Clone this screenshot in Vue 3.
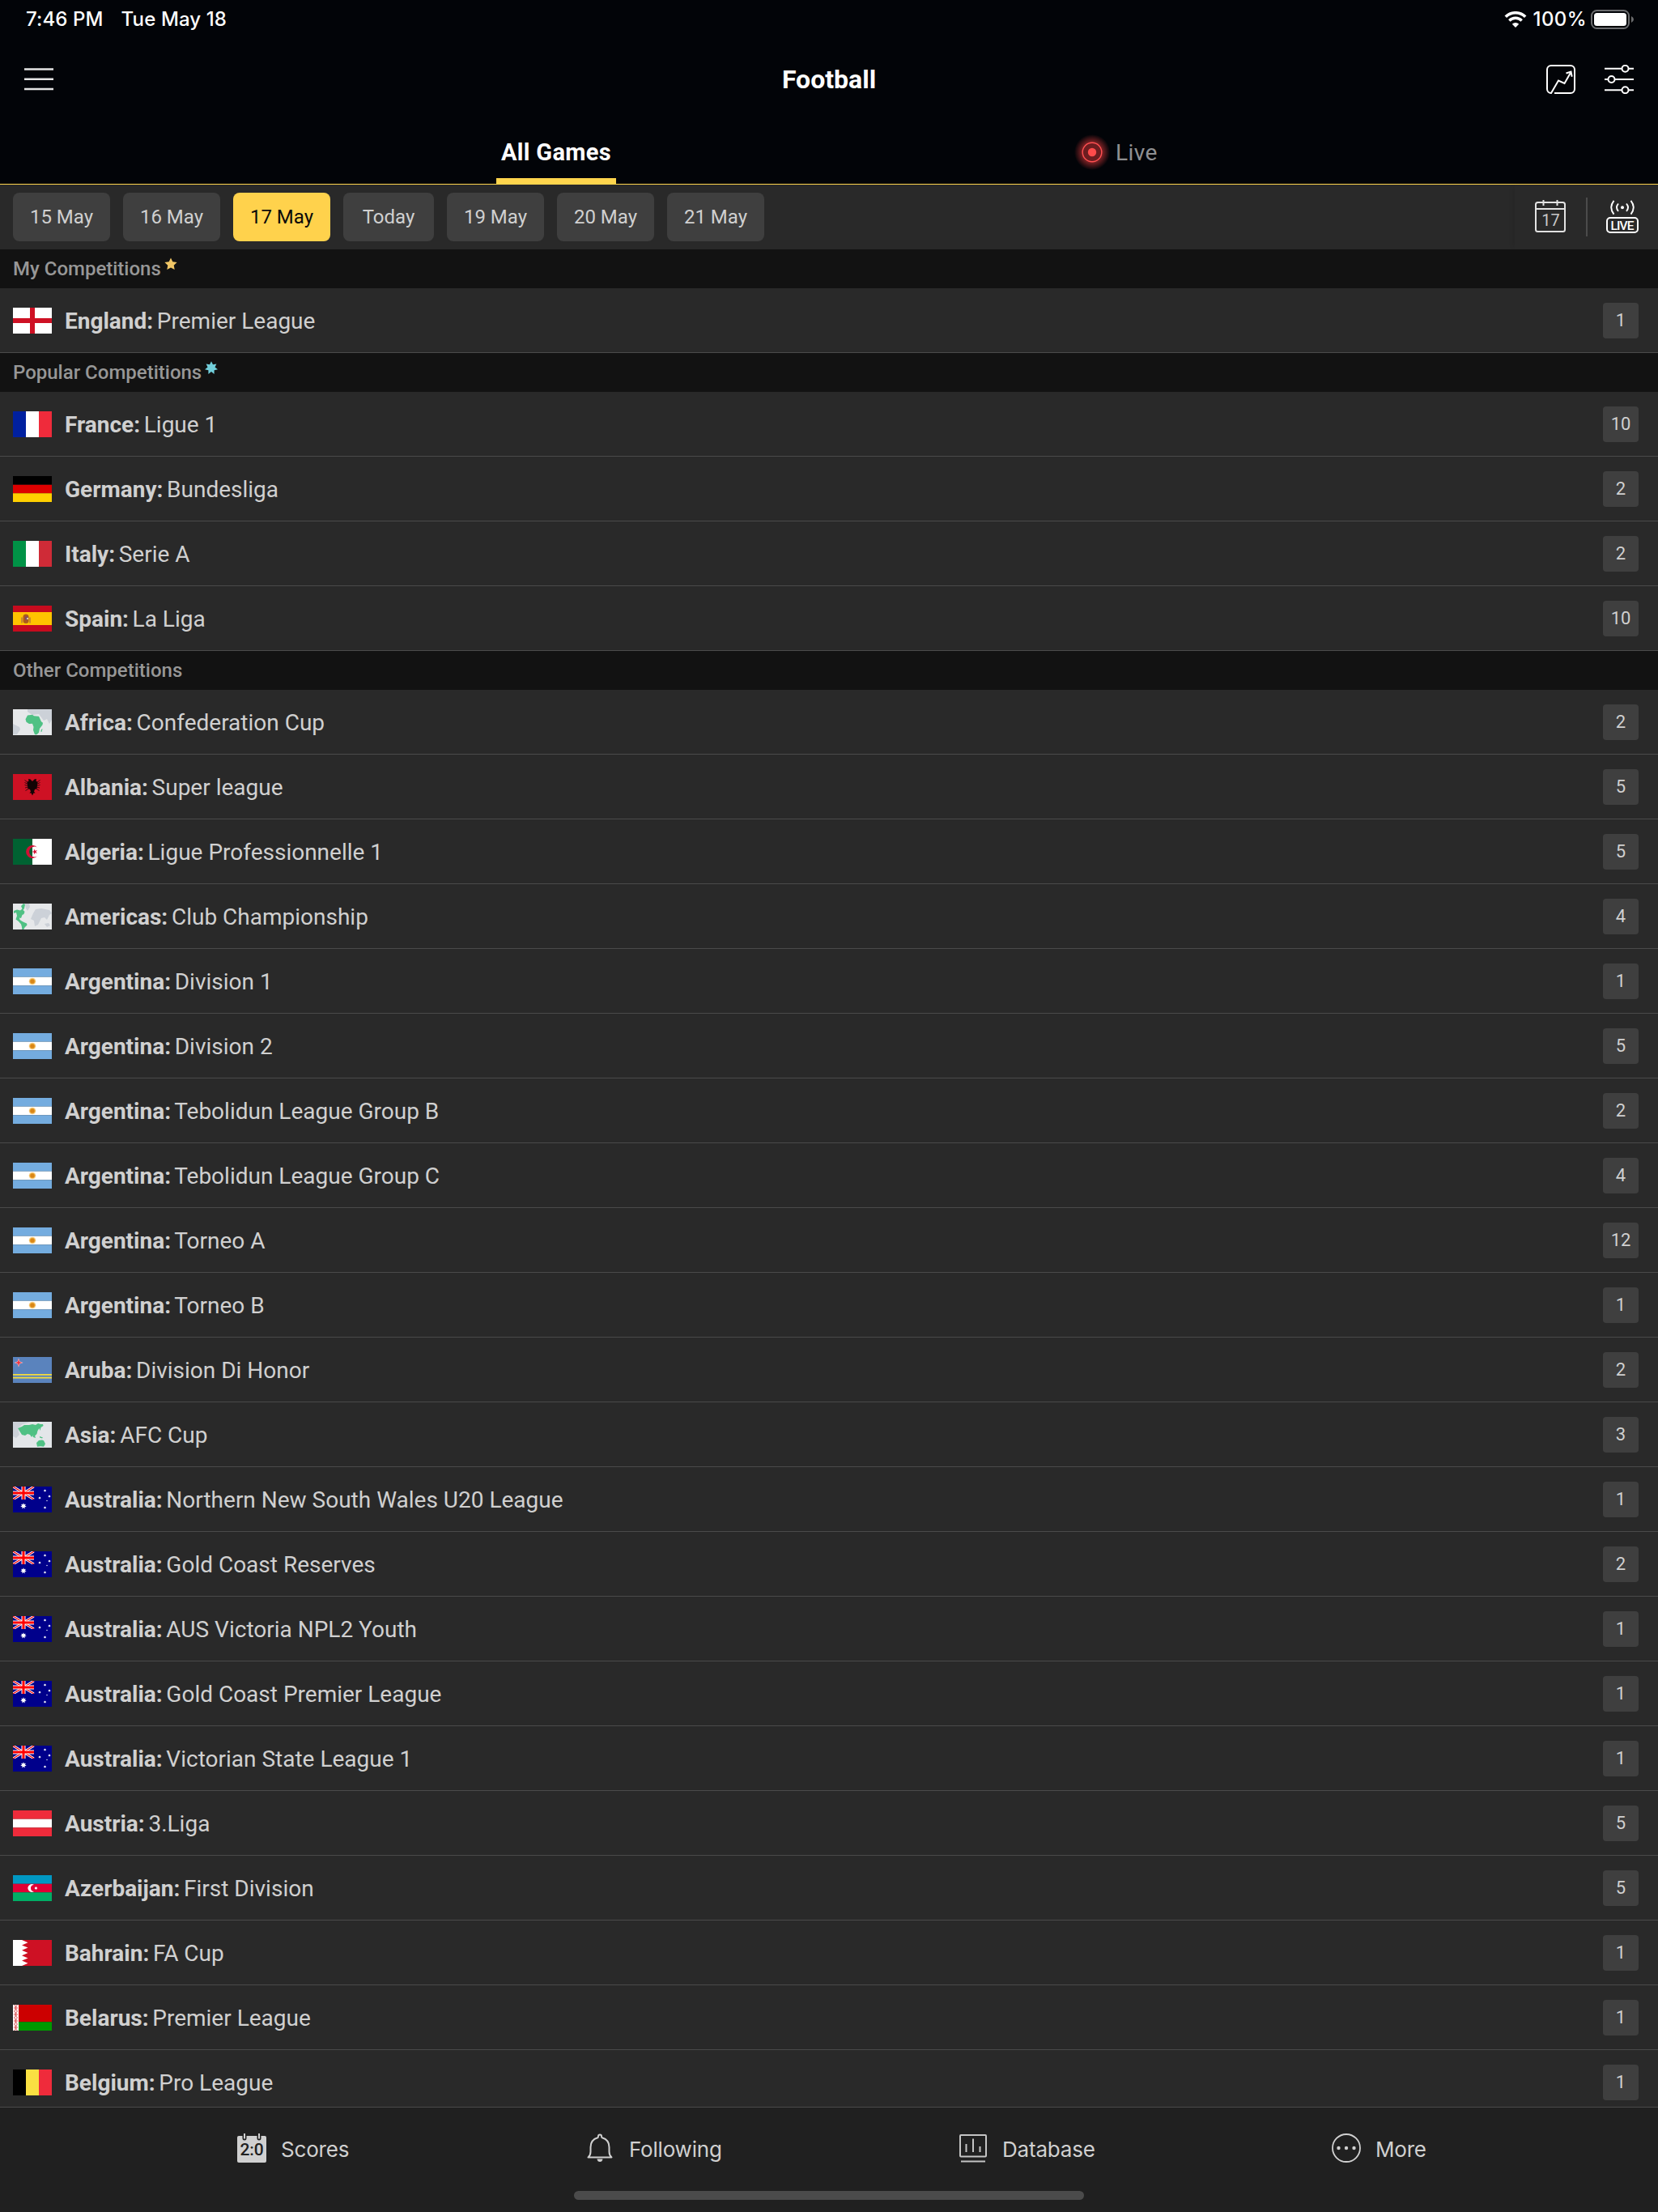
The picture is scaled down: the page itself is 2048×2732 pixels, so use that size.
<script setup>
const star = (cx, cy, R, r, n, rot = -90) => {
  const pts = []
  for (let i = 0; i < n * 2; i++) {
    const a = ((rot + (i * 180) / n) * Math.PI) / 180
    const d = i % 2 ? r : R
    pts.push(`${(cx + d * Math.cos(a)).toFixed(2)},${(cy + d * Math.sin(a)).toFixed(2)}`)
  }
  return pts.join(' ')
}
const v = (a, b, c) =>
  `<path fill="${a}" d="M0 0h16v32H0z"/><path fill="${b}" d="M16 0h16v32H16z"/><path fill="${c}" d="M32 0h16v32H32z"/>`
const h = (a, b, c) =>
  `<path fill="${a}" d="M0 0h48v10.67H0z"/><path fill="${b}" d="M0 10.67h48v10.66H0z"/><path fill="${c}" d="M0 21.33h48V32H0z"/>`
const poly = (fill, pts) => `<polygon fill="${fill}" points="${pts}"/>`

const flags = {
  england: '<path fill="#fff" d="M0 0h48v32H0z"/><path fill="#ce1124" d="M21 0h6v32h-6zM0 13h48v6H0z"/>',
  france: v('#00209f', '#fff', '#ef2b3b'),
  germany: h('#000', '#dd0000', '#ffcf00'),
  italy: v('#009246', '#fff', '#cf2b37'),
  spain:
    '<path fill="#c60b1e" d="M0 0h48v32H0z"/><path fill="#ffc400" d="M0 8h48v16H0z"/><path fill="#c98b2c" d="M10 14.5h2v7h-2zM20 14.5h2v7h-2z"/><path fill="#ad5a1e" d="M12.5 13.5c0-4 7-4 7 0v5.500q0 3-3.500 3t-3.500-3z"/><path fill="#7c4a6e" d="M15 13.500h3.500v4H15z"/><path fill="#d9c9a0" d="M17 15h2v2h-2z"/>',
  africa:
    '<path fill="#e6e8ea" d="M0 0h48v32H0z"/><path fill="#ccd1d8" d="M18 0h30v13l-3 5-3-6-4 2-6-8-8 1-6-4zM0 18l8 4 1 3-4 6H0z"/><path fill="#4fc184" d="M18 7.500l6-.8 2 1.500 6 .6 3 6.500 2 1.500-.5 2.500-3.500 4.500-1 5-2.500 2.400h-2.500l-2-5.500.5-4-1.500-4-4 .2-3.500-2.200-1-3.500z"/><path fill="#4fc184" d="M35 25l1.500-1-1 4-1.200-.5z"/>',
  albania:
    '<path fill="#ce1124" d="M0 0h48v32H0z"/><path fill="none" stroke="#3a0a10" stroke-width="1" d="M14.500 7.500l4 3M14.500 10.500l4 2M14.500 13.500l4 1M15 17l4-1M15.500 20.500l4-2.500M33.500 7.500l-4 3M33.500 10.500l-4 2M33.500 13.500l-4 1M33 17l-4-1M32.500 20.500l-4-2.500"/><path fill="#120405" d="M19 6l2.500.5L24 9l2.500-2.500L29 6l-.5 2.500 2 1.500-1 8-2.500 1-1 2.500 1.500 2-2 0L24 26.500l-1.500-3h-2l1.500-2-1-2.500-2.500-1-1-8 2-1.500z"/>',
  algeria:
    '<path fill="#006232" d="M0 0h24v32H0z"/><path fill="#fff" d="M24 0h24v32H24z"/><path fill="#d21034" d="M30.200 10.800a8 8 0 1 0 0 10.400 6.400 6.400 0 1 1 0-10.400z"/>' +
    poly('#d21034', star(27, 16, 3.6, 1.4, 5, 180)),
  americas:
    '<path fill="#e6e8ea" d="M0 0h48v32H0z"/><path fill="#ccd1d8" d="M15 0h5l1 4-3 5-2-3zM25 12l3-5 7-1 10 2 3 4-3 2-3 6-3-3-4 1-4 8-4 2-1-7-4-2zM39 25l5-1 2 3-4 2z"/><path fill="#4fc184" d="M1 9l4-1.500 4 1 2.500-2L10 3l3-3 2 1-1 5-1.500 2 2 2-1 3-2 1-1.500 4-2-.5.500 2.500 3 2 2 1 3.500 1.500.5 2-3 3-2 4-1-.5-.6-4.500-.9-3-3-3.500-3.500-2.500L5 15l-1-4-3 1z"/>',
  argentina:
    h('#74acdf', '#fff', '#74acdf') + poly('#f0b040', star(24, 16, 4.6, 3.4, 12)) + '<circle cx="24" cy="16" r="2.600" fill="#d98618"/>',
  aruba:
    '<path fill="#5a83bd" d="M0 0h48v32H0z"/><path fill="#f5dc3c" d="M0 21h48v1.700H0zM0 24.700h48v1.700H0z"/>' +
    poly('#f7c9cf', star(7, 7, 5.6, 2, 4)) + poly('#ef3340', star(7, 7, 4.4, 1.4, 4)),
  asia:
    '<path fill="#e3e6e9" d="M0 0h48v32H0z"/><path fill="#ccd1d8" d="M0 0h22l-10 3-6 5 2 8-4 4-4-2z"/><path fill="#4fc184" d="M6 8l5-2 3-2 6 0 4-1 4 1 3-2 3 1 3 0 .5 2-3 2-1 4-1-3-2 3-1 4-3 3-1.500-2-2 3-2-3-3-1-3 2-4-1zM24 16l3 1 1 3-3-1zM33 18l4 1.500-1 1-3-1zM29 26l3-3 4-.5 2 .7 2 4-2 3.500-4-.5-4 .5z"/>',
  australia:
    '<path fill="#00008b" d="M0 0h48v32H0z"/><path stroke="#fff" stroke-width="3" d="M0 0l26 16M26 0L0 16"/><path stroke="#f00" stroke-width="1.100" d="M0 0l26 16M26 0L0 16"/><path stroke="#fff" stroke-width="5" d="M13 0v16M0 8h26"/><path stroke="#f00" stroke-width="3" d="M13 0v16M0 8h26"/><path fill="#00008b" d="M26.500 0h4v17h-4zM0 16h30v3H0z"/>' +
    [[13, 24, 3.8], [39.5, 5, 1.8], [33, 14, 1.8], [45, 12, 1.8], [39.5, 26, 1.8]].map(([x, y, r]) => poly('#fff', star(x, y, r, r * 0.5, 7))).join('') +
    '<circle cx="42" cy="17.500" r=".7" fill="#fff"/>',
  austria: h('#ef2b3b', '#fff', '#ef2b3b'),
  azerbaijan:
    h('#0098c3', '#e00034', '#00ae65') +
    '<path fill="#fff" d="M26 12a4.800 4.800 0 1 0 0 8 4 4 0 1 1 0-8z"/>' + poly('#fff', star(28.4, 16, 2, 1.2, 8)),
  bahrain:
    '<path fill="#ce1124" d="M0 0h48v32H0z"/><path fill="#fff" d="M0 0h11l7.500 3.200L11 6.400l7.500 3.200L11 12.800l7.500 3.200-7.500 3.200 7.500 3.200-7.500 3.200 7.500 3.200L11 32H0z"/>',
  belarus:
    '<path fill="#c00" d="M0 0h48v21.330H0z"/><path fill="#090" d="M0 21.330h48V32H0z"/><path fill="#fff" d="M0 0h7v32H0z"/><path fill="none" stroke="#d84848" stroke-width="1" d="M1.500 0l4 4-4 4 4 4-4 4 4 4-4 4 4 4-4 4M5.500 0l-4 4 4 4-4 4 4 4-4 4 4 4-4 4 4 4M3.500 3v2M3.500 11v2M3.500 19v2M3.500 27v2"/>',
  belgium: v('#000', '#fae042', '#ef2b3b'),
}

const dates = [
  { label: '15 May' },
  { label: '16 May' },
  { label: '17 May', active: true },
  { label: 'Today', today: true },
  { label: '19 May' },
  { label: '20 May' },
  { label: '21 May' },
]

const row = (country, league, count) => ({ country, league, count, flag: flags[country.toLowerCase()] })
const sections = [
  { title: 'My Competitions', mark: star(8, 8.500, 8, 3.9, 5), color: '#f0c666', rows: [row('England', 'Premier League', 1)] },
  {
    title: 'Popular Competitions',
    mark: star(8, 8.500, 8.2, 4.6, 7),
    color: '#72cfdb',
    rows: [row('France', 'Ligue 1', 10), row('Germany', 'Bundesliga', 2), row('Italy', 'Serie A', 2), row('Spain', 'La Liga', 10)],
  },
  {
    title: 'Other Competitions',
    rows: [
      row('Africa', 'Confederation Cup', 2),
      row('Albania', 'Super league', 5),
      row('Algeria', 'Ligue Professionnelle 1', 5),
      row('Americas', 'Club Championship', 4),
      row('Argentina', 'Division 1', 1),
      row('Argentina', 'Division 2', 5),
      row('Argentina', 'Tebolidun League Group B', 2),
      row('Argentina', 'Tebolidun League Group C', 4),
      row('Argentina', 'Torneo A', 12),
      row('Argentina', 'Torneo B', 1),
      row('Aruba', 'Division Di Honor', 2),
      row('Asia', 'AFC Cup', 3),
      row('Australia', 'Northern New South Wales U20 League', 1),
      row('Australia', 'Gold Coast Reserves', 2),
      row('Australia', 'AUS Victoria NPL2 Youth', 1),
      row('Australia', 'Gold Coast Premier League', 1),
      row('Australia', 'Victorian State League 1', 1),
      row('Austria', '3.Liga', 5),
      row('Azerbaijan', 'First Division', 5),
      row('Bahrain', 'FA Cup', 1),
      row('Belarus', 'Premier League', 1),
      row('Belgium', 'Pro League', 1),
    ],
  },
]
</script>

<template>
  <div class="app">
    <header class="top">
      <div class="status">
        <span class="time">7:46 PM</span>
        <span class="day">Tue May 18</span>
        <svg class="wifi" width="28" height="20" viewBox="0 0 28 20">
          <path d="M1.800 6.800a17.300 17.300 0 0 1 24.400 0" fill="none" stroke="#fff" stroke-width="3.600" />
          <path d="M6.300 11.500a10.900 10.900 0 0 1 15.400 0" fill="none" stroke="#fff" stroke-width="3.400" />
          <path d="M14 20l-4.200-4.300a6 6 0 0 1 8.400 0z" fill="#fff" />
        </svg>
        <span class="pct">100%</span>
        <svg class="battery" width="54" height="24" viewBox="0 0 54 24">
          <rect x="1" y="1" width="46" height="22" rx="6.500" fill="none" stroke="#6b6c6e" stroke-width="2" />
          <rect x="4" y="4" width="40" height="16" rx="3.500" fill="#fff" />
          <path d="M50 8q3 1.500 3 4t-3 4z" fill="#6b6c6e" />
        </svg>
      </div>
      <div class="navbar">
        <svg class="menu" width="36" height="28" viewBox="0 0 36 28">
          <path d="M0 1.500h36M0 13.700h36M0 26h36" stroke="#e4e4e4" stroke-width="2.400" />
        </svg>
        <h1>Football</h1>
        <div class="actions">
          <svg width="36" height="36" viewBox="0 0 36 36" fill="none" stroke="#fff" stroke-width="2">
            <path d="M10 35h20a5 5 0 0 0 5-5V6a5 5 0 0 0-5-5H6a5 5 0 0 0-5 5v24a5 5 0 0 0 5 5l9-15.500 7.500 3.500L30.500 9M24.500 10.500l6-2 1.200 6.300" />
          </svg>
          <svg width="36" height="36" viewBox="0 0 36 36" fill="none" stroke="#fff" stroke-width="2">
            <path d="M0 4.800h21.500M29.500 4.800H36M0 18h4.500M12.500 18H36M0 31.200h21.500M29.500 31.200H36" />
            <circle cx="25.500" cy="4.800" r="4" /><circle cx="8.500" cy="18" r="4" /><circle cx="25.500" cy="31.200" r="4" />
          </svg>
        </div>
      </div>
      <nav class="tabs">
        <a class="tab all">All Games</a>
        <a class="tab live">
          <svg width="44" height="44" viewBox="0 0 44 44">
            <defs>
              <radialGradient id="glow">
                <stop offset=".5" stop-color="#e03a3c" stop-opacity=".62" />
                <stop offset="1" stop-color="#e03a3c" stop-opacity="0" />
              </radialGradient>
            </defs>
            <circle cx="22" cy="22" r="22" fill="url(#glow)" />
            <circle cx="22" cy="22" r="11.800" fill="#6c1d20" stroke="#ff5052" stroke-width="1.400" />
            <circle cx="22" cy="22" r="5.200" fill="#ff4b4b" />
          </svg>
          <span>Live</span>
        </a>
      </nav>
    </header>

    <div class="datebar">
      <div class="chips">
        <span v-for="d in dates" :key="d.label" class="chip" :class="{ active: d.active, today: d.today }">{{ d.label }}</span>
      </div>
      <div class="tools">
        <svg class="cal" width="38" height="40" viewBox="0 0 38 40">
          <rect x="1" y="3" width="36" height="36" rx="2.500" fill="none" stroke="#e2e2e2" stroke-width="2" />
          <path d="M1 11h36M10.500 0v7M27.500 0v7" fill="none" stroke="#e2e2e2" stroke-width="2" />
          <text x="19.500" y="31.800" text-anchor="middle" class="cal-num">17</text>
        </svg>
        <i class="sep"></i>
        <svg class="livebtn" width="40" height="40" viewBox="0 0 40 40">
          <rect x="1" y="22" width="38" height="18" rx="4" fill="none" stroke="#fff" stroke-width="2" />
          <text x="20" y="36.600" text-anchor="middle" textLength="29" class="live-txt">LIVE</text>
          <g fill="none" stroke="#fff" stroke-width="1.900">
            <path d="M15 4.500q-4 4.700 0 9.400M25 4.500q4 4.700 0 9.400M9.500.8q-6.500 8.400 0 16.800M30.500.8q6.500 8.400 0 16.800" />
          </g>
          <circle cx="20" cy="9.200" r="2" fill="#fff" />
        </svg>
      </div>
    </div>

    <main class="list">
      <section v-for="s in sections" :key="s.title">
        <h2>
          {{ s.title }}
          <svg v-if="s.mark" width="16" height="16" viewBox="0 0 16 16"><polygon :points="s.mark" :fill="s.color" /></svg>
        </h2>
        <div v-for="r in s.rows" :key="r.country + r.league" class="row">
          <svg class="flag" width="48" height="32" viewBox="0 0 48 32" v-html="r.flag"></svg>
          <div class="name"><b>{{ r.country }}:</b> {{ r.league }}</div>
          <span class="count">{{ r.count }}</span>
        </div>
      </section>
    </main>

    <footer>
      <nav class="bottom">
        <a>
          <svg width="36" height="36" viewBox="0 0 36 36">
            <rect y="3" width="36" height="33" rx="2" fill="#d0d0d0" />
            <path d="M9 0v6M27 0v6" stroke="#202020" stroke-width="5" stroke-linecap="round" />
            <path d="M9 0v6.500M27 0v6.500" stroke="#d0d0d0" stroke-width="2" />
            <text x="18" y="27.300" text-anchor="middle" class="score-txt">2:0</text>
          </svg>
          <span>Scores</span>
        </a>
        <a>
          <svg width="36" height="36" viewBox="0 0 36 36">
            <path d="M3.500 29.500c2.500-2 3-3.500 3-7V17c0-6 3-10 8.700-11.700.6-.3.800-.8.800-1.800C16 .7 20 .7 20 3.500c0 1 .2 1.500.8 1.800C26.500 7 29.500 11 29.500 17v5.500c0 3.500.5 5 3 7z" fill="none" stroke="#d0d0d0" stroke-width="2" stroke-linejoin="round" />
            <path d="M14.500 31.500h7q-.5 3.500-3.500 3.500t-3.500-3.500z" fill="#d0d0d0" />
          </svg>
          <span>Following</span>
        </a>
        <a>
          <svg width="36" height="36" viewBox="0 0 36 36" fill="none" stroke="#c4c4c4" stroke-width="2">
            <rect x="2" y="2" width="32" height="26.500" rx="1" /><path d="M3 34.500h30" />
            <path d="M9.500 13v10M18 6.500V23M26.500 16v7" />
          </svg>
          <span>Database</span>
        </a>
        <a>
          <svg width="36" height="36" viewBox="0 0 36 36">
            <circle cx="18" cy="18" r="17" fill="none" stroke="#d0d0d0" stroke-width="1.800" />
            <circle cx="8.500" cy="18" r="2.200" fill="#d0d0d0" /><circle cx="18" cy="18" r="2.200" fill="#d0d0d0" /><circle cx="27.500" cy="18" r="2.200" fill="#d0d0d0" />
          </svg>
          <span>More</span>
        </a>
      </nav>
      <div class="home"></div>
    </footer>
  </div>
</template>

<style>
body {
  margin: 0;
  background: #292929;
}
</style>

<style scoped>
.app {
  width: 2048px;
  height: 2732px;
  display: flex;
  flex-direction: column;
  overflow: hidden;
  background: #292929;
  color: #d0d0d0;
  font-family: Roboto, 'Liberation Sans', sans-serif;
}
svg {
  display: block;
  flex: none;
}
.top {
  height: 228px;
  box-sizing: border-box;
  flex: none;
  background: #020408;
  border-bottom: 1px solid #ffd54d;
  display: flex;
  flex-direction: column;
}
.status {
  height: 48px;
  display: flex;
  align-items: center;
  padding: 0 29px 0 32px;
  color: #fff;
  font: 500 24px/48px Inter, sans-serif;
  letter-spacing: 0.12px;
  white-space: nowrap;
}
.day {
  margin-left: 22px;
}
.wifi {
  margin-left: auto;
}
.pct {
  margin: 0 5px 0 8px;
  letter-spacing: 0.4px;
}
.navbar {
  height: 100px;
  display: grid;
  grid-template-columns: 1fr auto 1fr;
  align-items: center;
  padding: 0 30px;
}
h1 {
  margin: 0;
  font-size: 32px;
  font-weight: 700;
  line-height: 100px;
  color: #fff;
}
.actions {
  display: flex;
  justify-content: flex-end;
  gap: 36px;
}
.tabs {
  height: 79px;
  display: flex;
  font-size: 28px;
}
.tab {
  height: 79px;
  box-sizing: border-box;
  display: flex;
  align-items: center;
  justify-content: center;
  white-space: nowrap;
}
.all {
  width: 148px;
  margin-left: 613px;
  border-bottom: 7px solid #ffd54d;
  padding-top: 8px;
  font-size: 29px;
  letter-spacing: 0.35px;
  font-weight: 700;
  color: #fff;
}
.live {
  margin-left: 566px;
  padding-top: 1px;
  color: #8f9092;
}
.live span {
  margin-left: 7px;
  letter-spacing: 0.4px;
}
.datebar {
  height: 80px;
  flex: none;
  display: flex;
  justify-content: space-between;
  align-items: center;
  padding-left: 16px;
}
.chips {
  display: flex;
  gap: 16px;
}
.chip {
  width: 120px;
  height: 60px;
  border-radius: 8px;
  background: #3f3f3f;
  font-size: 24px;
  line-height: 60px;
  text-align: center;
}
.chip.today {
  width: 112px;
}
.chip.active {
  background: #ffd24c;
  color: #0a0a0a;
}
.tools {
  height: 80px;
  display: flex;
  align-items: center;
  padding: 0 24px 0 25px;
  box-shadow: -4px 0 6px -3px rgba(0, 0, 0, 0.12);
}
.sep {
  width: 2px;
  height: 48px;
  margin: 0 23px 0 25px;
  background: #4b4b4b;
}
.cal,
.livebtn {
  overflow: visible;
  margin-top: -2px;
}
.cal-num {
  font: 400 20px Roboto, sans-serif;
  fill: #c8c8c8;
}
.live-txt {
  font: 500 15.500px Roboto, sans-serif;
  fill: #fff;
}
.list {
  flex: 1;
  min-height: 0;
  overflow: hidden;
}
h2 {
  margin: 0;
  height: 48px;
  padding-left: 16px;
  display: flex;
  background: #121212;
  color: #979797;
  font-size: 24px;
  font-weight: 500;
  line-height: 48px;
}
h2 svg {
  margin: 10px 0 0 4px;
  overflow: visible;
}
.row {
  height: 80px;
  box-sizing: border-box;
  display: flex;
  align-items: center;
  padding: 1px 24px 0 16px;
  border-bottom: 1px solid #4a4a4a;
  font-size: 28px;
}
.name {
  flex: 1;
  margin-left: 16px;
  padding-top: 2px;
  line-height: 40px;
}
.name b {
  margin-right: -2.3px;
}
.count {
  width: 44px;
  height: 44px;
  border-radius: 4px;
  background: #3f3f3f;
  font-size: 22px;
  line-height: 44px;
  text-align: center;
}
footer {
  height: 130px;
  box-sizing: border-box;
  flex: none;
  background: #202020;
  border-top: 1px solid #4a4a4a;
}
.bottom {
  height: 100px;
  display: grid;
  grid-template-columns: 430px 461px 461px auto;
  align-items: center;
  padding-left: 293px;
  font: 400 26px/40px Inter, sans-serif;
  letter-spacing: -0.2px;
}
.bottom a {
  display: flex;
  align-items: center;
}
.bottom span {
  margin-left: 18px;
  padding-top: 4px;
}
.score-txt {
  font: 500 21px Roboto, sans-serif;
  fill: #202020;
}
.home {
  width: 630px;
  height: 11px;
  margin: 3px auto 0;
  border-radius: 6px;
  background: #4b4b4b;
}
</style>
